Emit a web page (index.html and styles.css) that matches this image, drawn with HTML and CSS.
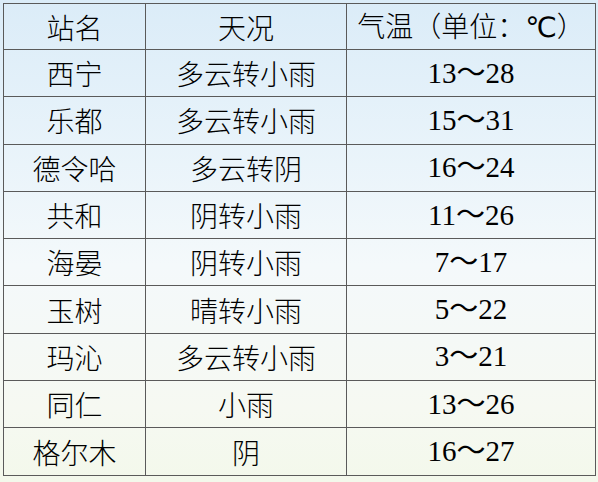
FILE: index.html
```html
<!DOCTYPE html>
<html lang="zh">
<head>
<meta charset="utf-8">
<link rel="stylesheet" href="styles.css">
</head>
<body>
<div class="page">
<table class="weather">
  <colgroup>
    <col class="c1"><col class="c2"><col class="c3">
  </colgroup>
  <thead>
    <tr class="head"><th>站名</th><th>天况</th><th>气温（单位：<span class="deg">℃</span>）</th></tr>
  </thead>
  <tbody>
    <tr><td>西宁</td><td>多云转小雨</td><td class="num">13～28</td></tr>
    <tr><td>乐都</td><td>多云转小雨</td><td class="num">15～31</td></tr>
    <tr><td>德令哈</td><td>多云转阴</td><td class="num">16～24</td></tr>
    <tr><td>共和</td><td>阴转小雨</td><td class="num">11～26</td></tr>
    <tr><td>海晏</td><td>阴转小雨</td><td class="num">7～17</td></tr>
    <tr><td>玉树</td><td>晴转小雨</td><td class="num">5～22</td></tr>
    <tr><td>玛沁</td><td>多云转小雨</td><td class="num">3～21</td></tr>
    <tr><td>同仁</td><td>小雨</td><td class="num">13～26</td></tr>
    <tr><td>格尔木</td><td>阴</td><td class="num">16～27</td></tr>
  </tbody>
</table>
</div>
</body>
</html>
```
FILE: styles.css
```css
html, body {
  margin: 0;
  padding: 0;
}
body {
  width: 598px;
  height: 482px;
  overflow: hidden;
  background: linear-gradient(to bottom, #dbecf8 0%, #e8f3fa 30%, #f4f9fb 55%, #f6f9f2 85%, #f3f8eb 100%);
}
.page {
  padding: 3px 0 0 3px;
}
.weather {
  border-collapse: collapse;
  width: 592px;
  table-layout: fixed;
  font-size: 28px;
  color: #000;
}
.c1 { width: 142px; }
.c2 { width: 201px; }
.c3 { width: 249px; }
.weather th,
.weather td {
  border: 1px solid #5a5a5a;
  padding: 0;
  text-align: center;
  vertical-align: middle;
  height: 46.3px;
  line-height: 1;
  font-family: "Noto Sans CJK SC", sans-serif;
  font-weight: 300;
}
.weather .head th {
  height: 45px;
}
.weather td.num {
  font-family: "Liberation Serif", "Noto Sans CJK SC", serif;
  font-weight: normal;
  font-size: 29px;
}
.deg {
  font-family: "Liberation Sans", "DejaVu Sans", sans-serif;
  font-size: 28px;
  font-weight: normal;
}
```
